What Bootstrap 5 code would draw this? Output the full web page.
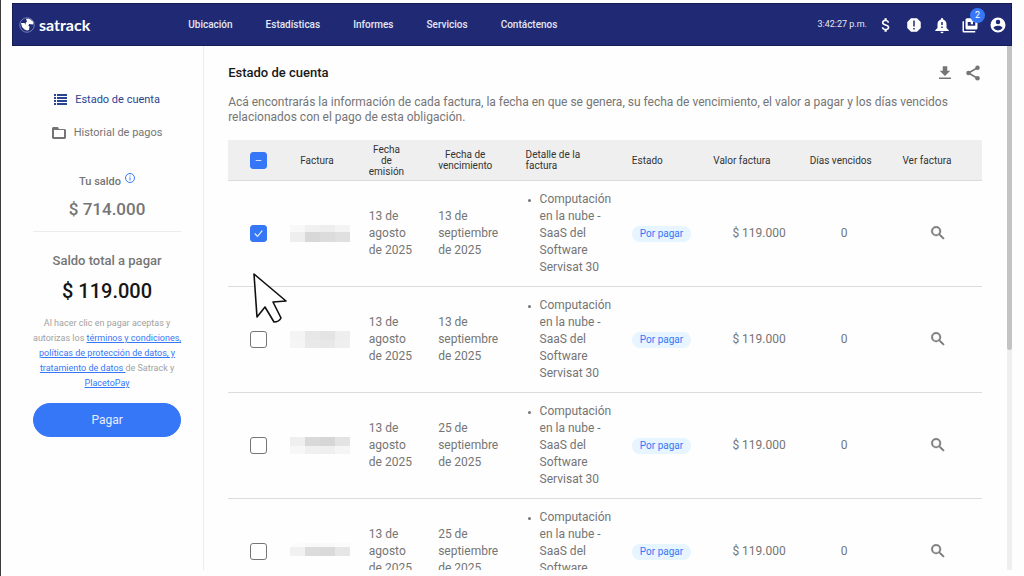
<!DOCTYPE html>
<html lang="es">
<head>
<meta charset="utf-8">
<meta name="viewport" content="width=device-width, initial-scale=1">
<title>Satrack - Estado de cuenta</title>
<link href="https://cdn.jsdelivr.net/npm/bootstrap@5.3.0/dist/css/bootstrap.min.css" rel="stylesheet">
<style>
  :root { --brand: #202a74; --accent: #3677f8; --ink: #757575; }
  body { font-family: Roboto, "Liberation Sans", sans-serif; font-size: 12px; color: var(--ink); background: #fefefe; border-left: 1px solid #3c3c3c; }
  svg { display: block; fill: currentColor; }
  .shell { height: 100vh; padding: 3px 12px 6px 11px; overflow: hidden; }
  .topbar { background: var(--brand); border: 1px solid #141b55; height: 43px; padding: 0 4px 0 6px; color: #fff; }
  .brand-name { font-family: Lato, Roboto, sans-serif; font-weight: 700; font-size: 16px; line-height: 20px; }
  .main-menu { gap: 33px; padding-left: 98px; }
  .main-menu a { color: #e4e6f5; font-size: 10px; font-weight: 500; text-decoration: none; }
  .clock { font-size: 9px; color: #e4e6f5; }
  .tools { gap: 10px; }
  .tool { padding: 0; border: 0; background: none; color: inherit; position: relative; }
  .tool-count { position: absolute; top: -8px; left: 9px; width: 15px; height: 15px; border-radius: 50%; background: var(--accent); font-size: 9px; line-height: 15px; text-align: center; }
  .sidebar { flex: 0 0 192px; padding: 46px 22px 0 21px; border-right: 1px solid #ececec; }
  .side-nav { gap: 18px; line-height: 15px; font-size: 11px; }
  .side-nav a { color: var(--ink); text-decoration: none; }
  .side-nav a.active { color: #2a4494; }
  .balance { border-bottom: 1px solid #ececec; padding: 33px 0 12px; }
  .label-sm { font-size: 11px; line-height: 18px; font-weight: 500; }
  .amount { font-size: 17px; line-height: 20px; font-weight: 500; }
  .label-lg { font-size: 13px; line-height: 18px; font-weight: 500; }
  .amount-lg { font-size: 20px; line-height: 26px; font-weight: 500; color: #161616; }
  .legal { font-size: 9px; line-height: 15px; color: #a2a2a2; }
  .legal a { color: var(--accent); }
  .btn-pay { --bs-btn-color: #e6eeff; --bs-btn-bg: var(--accent); --bs-btn-border-color: var(--accent); --bs-btn-hover-color: #fff; --bs-btn-hover-bg: #2665e4; --bs-btn-font-size: 12px; --bs-btn-border-radius: 17px; --bs-btn-padding-y: 7px; }
  .content { padding: 18px 25px 0 24px; overflow: hidden; min-width: 0; }
  .content h1 { font-size: 13px; line-height: 18px; font-weight: 500; color: #181818; }
  .intro { font-size: 12px; line-height: 15px; margin: 13px 0 15px; }
  .invoices { table-layout: fixed; line-height: 17px; font-size: 12px; --bs-table-bg: transparent; --bs-table-color: var(--ink); border-color: #dcdcdc; }
  .invoices th { background: #efefef; color: #333; font-size: 10px; line-height: 11px; font-weight: 400; height: 40px; padding: 3px 8px 2px; vertical-align: middle; }
  .invoices td { padding: 10px 8px; vertical-align: middle; }
  .invoices .pick { padding-left: 7px; padding-right: 9px; }
  .invoices ul { padding-left: 14px; }
  .invoices li::marker { font-size: 9px; }
  .invoices .number-head { padding-left: 0; padding-right: 17px; }
  .invoices .form-check-input { width: 17px; height: 17px; margin: 0; border: 1px solid #757575; border-radius: 3px; display: inline-block; vertical-align: middle; }
  .invoices .form-check-input:checked, .invoices .form-check-input:indeterminate { background-color: var(--accent); border-color: var(--accent); background-size: 15px; }
  .invoices .form-check-input:checked { background-image: url("data:image/svg+xml,%3csvg xmlns='http://www.w3.org/2000/svg' viewBox='0 0 16 16'%3e%3cpath d='M4 8l3 3 5-6' fill='none' stroke='%23e6eeff' stroke-width='1.3'/%3e%3c/svg%3e"); }
  .invoices .form-check-input:indeterminate { background-image: url("data:image/svg+xml,%3csvg xmlns='http://www.w3.org/2000/svg' viewBox='0 0 16 16'%3e%3cpath d='M5 8h6' fill='none' stroke='%23cfdefd' stroke-width='1.3'/%3e%3c/svg%3e"); }
  .state { background: #e6f5ff; color: var(--accent); font-size: 10px; line-height: 16px; padding: 0 8px; }
  .track { flex: 0 0 5px; background: #efefef; }
  .thumb { height: 58%; background: #c2c3c5; border-radius: 0 0 3px 3px; }
  .pointer { position: absolute; left: 252px; top: 272px; }
</style>
</head>
<body>
<svg class="d-none">
  <symbol id="lens" viewBox="0 0 24 24"><path d="M15.500 14h-.79l-.28-.27A6.470 6.470 0 0 0 16 9.500 6.500 6.500 0 1 0 9.500 16c1.610 0 3.090-.59 4.230-1.570l.27.28v.79l5 4.990L20.490 19l-4.990-5zm-6 0a4.500 4.500 0 1 1 0-9 4.500 4.500 0 0 1 0 9z" stroke="currentColor" stroke-width=".5"/></symbol>
</svg>
<div class="shell d-flex flex-column">
  <header class="topbar d-flex align-items-center flex-shrink-0">
    <a href="#" class="d-flex align-items-center gap-1 text-white text-decoration-none">
      <svg width="16" height="16" viewBox="0 0 32 32"><circle cx="16" cy="16" r="14.500" fill="none" stroke="#8f97cc" stroke-width="1.500"/><path d="M14 4c4-1 9 0 11 3l4 3-1 5-8-1-1 4-5-2-1-4 3-3zM4 12l7 0 3 4 7 3-1 7-4 1-5-2-5-5z"/></svg>
      <span class="brand-name">satrack</span>
    </a>
    <nav class="main-menu d-flex">
      <a href="#">Ubicación</a><a href="#">Estadísticas</a><a href="#">Informes</a><a href="#">Servicios</a><a href="#">Contáctenos</a>
    </nav>
    <div class="tools d-flex align-items-center ms-auto">
      <span class="clock">3:42:27 p.m.</span>
      <button class="tool" aria-label="Pagos"><svg width="18" height="18" viewBox="0 0 24 24"><path d="M11.800 10.900c-2.270-.59-3-1.200-3-2.150 0-1.090 1.010-1.850 2.700-1.850 1.780 0 2.440.85 2.500 2.100h2.210c-.07-1.720-1.120-3.300-3.210-3.810V3h-3v2.160c-1.940.42-3.500 1.680-3.500 3.610 0 2.310 1.910 3.460 4.700 4.130 2.500.6 3 1.480 3 2.410 0 .69-.49 1.790-2.700 1.790-2.060 0-2.870-.92-2.980-2.100h-2.200c.12 2.190 1.760 3.420 3.680 3.830V21h3v-2.150c1.950-.37 3.500-1.500 3.500-3.550 0-2.840-2.430-3.810-4.700-4.400z"/></svg></button>
      <button class="tool" aria-label="Avisos"><svg width="18" height="18" viewBox="0 0 24 24"><path fill-rule="evenodd" d="M8 3h8l5 5v8l-5 5H8l-5-5V8zM11 6v8h2V6zm0 10v2h2v-2z"/></svg></button>
      <button class="tool" aria-label="Alertas"><svg width="18" height="18" viewBox="0 0 24 24"><path fill-rule="evenodd" d="M18 16v-5c0-3.070-1.640-5.640-4.500-6.320V4a1.500 1.500 0 0 0-3 0v.68C7.630 5.360 6 7.920 6 11v5l-3 3v1h18v-1zM10 21h4a2 2 0 0 1-4 0zM11 8v4h2V8zm0 6v2h2v-2z"/></svg></button>
      <button class="tool" aria-label="Mensajes"><svg width="18" height="18" viewBox="0 0 24 24"><path fill-rule="evenodd" d="M2 7h2v13h15v2H4a2 2 0 0 1-2-2zM8 3h12a2 2 0 0 1 2 2v11a2 2 0 0 1-2 2H8a2 2 0 0 1-2-2V5c0-1 1-2 2-2zm1 5v5h10V8h-3v3h-3V8z"/></svg><span class="tool-count">2</span></button>
      <button class="tool" aria-label="Perfil"><svg width="18" height="18" viewBox="0 0 24 24"><path d="M12 2a10 10 0 1 0 0 20 10 10 0 0 0 0-20zm0 3a3 3 0 1 1 0 6 3 3 0 0 1 0-6zm0 14.200a7.200 7.200 0 0 1-6-3.220c.03-1.990 4-3.080 6-3.080s5.970 1.090 6 3.080a7.200 7.200 0 0 1-6 3.220z"/></svg></button>
    </div>
  </header>
  <div class="d-flex flex-grow-1 overflow-hidden">
    <aside class="sidebar text-center">
      <nav class="side-nav d-flex flex-column align-items-center">
        <a href="#" class="active d-flex align-items-center gap-2"><svg width="13" height="11" viewBox="0 0 13 11"><path d="M0 0h2v2H0zM3 0h10v2H3zM0 3h2v2H0zM3 3h10v2H3zM0 6h2v2H0zM3 6h10v2H3zM0 9h2v2H0zM3 9h10v2H3z"/></svg>Estado de cuenta</a>
        <a href="#" class="d-flex align-items-center gap-2"><svg width="14" height="12" viewBox="0 0 14 12"><path fill-rule="evenodd" d="M1 0h5l1 2h6l1 1v8l-1 1H1l-1-1V1zm1 3v7h10V3z"/></svg>Historial de pagos</a>
      </nav>
      <section class="balance">
        <div class="label-sm d-flex justify-content-center gap-1">Tu saldo <svg width="10" height="10" viewBox="0 0 20 20" color="#3677f8"><circle cx="10" cy="10" r="9" fill="none" stroke="currentColor" stroke-width="2"/><path d="M9 9h2v6H9zM9 5h2v2H9z"/></svg></div>
        <div class="amount mt-2">$ 714.000</div>
      </section>
      <section class="pt-3">
        <div class="label-lg pt-1">Saldo total a pagar</div>
        <div class="amount-lg mt-2 mb-2 pb-1">$ 119.000</div>
        <p class="legal text-nowrap mb-2 pb-1">Al hacer clic en pagar aceptas y<br>autorizas los <a href="#">términos y condiciones,<br>políticas de protección de datos, y<br>tratamiento de datos </a>de Satrack y<br><a href="#">PlacetoPay</a></p>
        <button type="button" class="btn btn-pay w-100">Pagar</button>
      </section>
    </aside>
    <main class="content flex-grow-1">
      <div class="d-flex align-items-center justify-content-between">
        <h1 class="m-0">Estado de cuenta</h1>
        <div class="tools d-flex">
          <button class="tool" aria-label="Descargar"><svg width="18" height="18" viewBox="0 0 24 24"><path d="M19 9h-4V3H9v6H5l7 7zM4 18v2h16v-2z"/></svg></button>
          <button class="tool" aria-label="Compartir"><svg width="18" height="18" viewBox="0 0 24 24"><path d="M6 12 18 5M6 12l12 7" fill="none" stroke="currentColor" stroke-width="2"/><circle cx="18" cy="5" r="3"/><circle cx="6" cy="12" r="3"/><circle cx="18" cy="19" r="3"/></svg></button>
        </div>
      </div>
      <p class="intro">Acá encontrarás la información de cada factura, la fecha en que se genera, su fecha de vencimiento, el valor a pagar y los días vencidos relacionados con el pago de esta obligación.</p>
      <table class="table invoices mb-0">
        <colgroup><col style="width:8.2%"><col style="width:9.4%"><col style="width:9.2%"><col style="width:11.6%"><col style="width:14.1%"><col style="width:10.8%"><col style="width:12.8%"><col style="width:12.3%"><col style="width:11.6%"></colgroup>
        <thead><tr>
          <th class="pick text-center"><input id="all" class="form-check-input" type="checkbox" aria-label="Seleccionar todas"></th>
          <th class="number-head text-center">Factura</th>
          <th><div class="d-inline-block text-center">Fecha<br>de<br>emisión</div></th>
          <th><div class="d-inline-block text-center">Fecha de<br>vencimiento</div></th>
          <th>Detalle de la<br>factura</th><th>Estado</th><th>Valor factura</th><th>Días vencidos</th><th>Ver factura</th>
        </tr></thead>
        <tbody id="rows"></tbody>
      </table>
    </main>
    <div class="track"><div class="thumb"></div></div>
  </div>
</div>
<svg class="pointer" width="36" height="52" viewBox="0 0 36 52"><path d="M2 2 34 29 21 30 29 46Q27 50 22 50L13 35 5 45Z" fill="#fff" stroke="#111" stroke-width="1.600" stroke-linejoin="round"/></svg>
<script src="https://cdn.jsdelivr.net/npm/bootstrap@5.3.0/dist/js/bootstrap.bundle.min.js"></script>
<script>
  // Hidden invoice numbers: height of the top band, then the greys of each band.
  const invoices = [
    { due: '13 de', checked: true, split: 7, bands: [['#f8f8f8', '#f0f0f0', '#eeeeee', '#f4f4f4'], ['#eeeeee', '#d8d8d8', '#dcdcdc', '#e0e0e0']] },
    { due: '13 de', split: 9, bands: [['#f4f4f4', '#e7e7e7', '#e4e4e4', '#eeeeee'], ['#f5f5f5', '#e9e9e9', '#e8e8e8', '#efefef']] },
    { due: '25 de', split: 9, bands: [['#efefef', '#d9d9d9', '#d6d6d6', '#e3e3e3'], ['#f7f7f7', '#f0f0f0', '#efefef', '#f5f5f5']] },
    { due: '25 de', split: 4, last: 13, bands: [['#fcfcfc', '#f9f9f9', '#f9f9f9', '#fbfbfb'], ['#f1f1f1', '#dcdcdc', '#dadada', '#e6e6e6']] }
  ];
  const mask = r => r.bands.map((b, j) => b.map((c, i) =>
    `<rect x="${i * 15}" y="${j ? r.split : 0}" width="15" height="${j ? (r.last || 17) - r.split : r.split}" fill="${c}"/>`).join('')).join('');
  document.getElementById('rows').innerHTML = invoices.map((r, n) => `<tr>
    <td class="pick text-center"><input class="form-check-input" type="checkbox" aria-label="Factura ${n + 1}" ${r.checked ? 'checked' : ''}></td>
    <td class="px-0"><svg width="60" height="17" shape-rendering="crispEdges">${mask(r)}</svg></td>
    <td>13 de<br>agosto<br>de 2025</td>
    <td>${r.due}<br>septiembre<br>de 2025</td>
    <td><ul class="mb-0"><li>Computación<br>en la nube -<br>SaaS del<br>Software<br>Servisat 30</li></ul></td>
    <td><span class="state d-inline-block rounded-pill text-nowrap">Por pagar</span></td>
    <td class="text-end pe-3 text-nowrap">$ 119.000</td>
    <td class="text-center pe-3">0</td>
    <td><button class="tool d-block mx-auto" aria-label="Ver factura"><svg width="18" height="18"><use href="#lens"/></svg></button></td>
  </tr>`).join('');
  document.getElementById('all').indeterminate = true;
</script>
</body>
</html>
